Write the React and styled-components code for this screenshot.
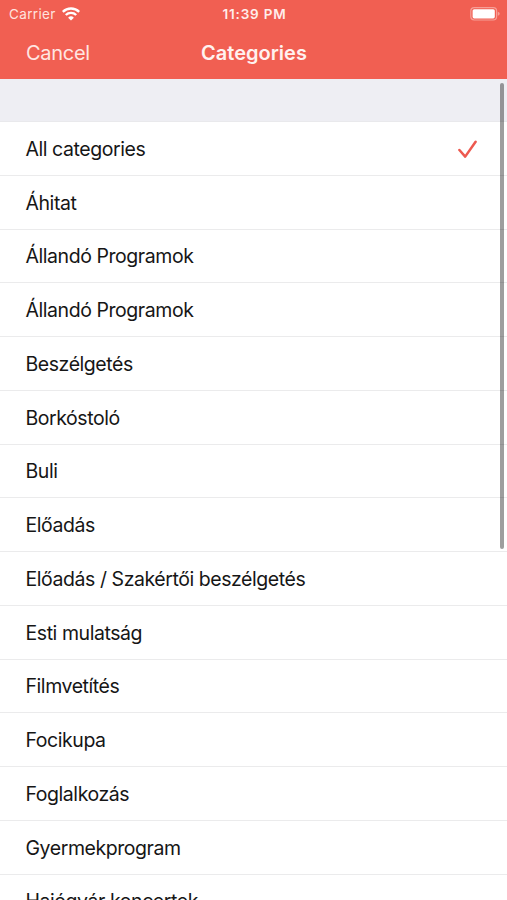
import React from 'react';
import styled, { createGlobalStyle } from 'styled-components';

const categories = [
  'All categories',
  'Áhitat',
  'Állandó Programok',
  'Állandó Programok',
  'Beszélgetés',
  'Borkóstoló',
  'Buli',
  'Előadás',
  'Előadás / Szakértői beszélgetés',
  'Esti mulatság',
  'Filmvetítés',
  'Focikupa',
  'Foglalkozás',
  'Gyermekprogram',
  'Hajógyár koncertek',
];

const App = () => {
  const [selected, setSelected] = React.useState(0);

  return (
    <React.Fragment>
      <GlobalStyle />
      <Screen>
        <Header>
          <StatusBar>
            <Carrier>
              <span>Carrier</span>
              <WifiIcon />
            </Carrier>
            <Time>11:39 PM</Time>
            <BatteryIcon />
          </StatusBar>
          <NavBar>
            <CancelButton type="button">Cancel</CancelButton>
            <Title>Categories</Title>
          </NavBar>
        </Header>
        <SectionGap />
        <List>
          {categories.map((name, idx) => (
            <Row key={idx} onClick={() => setSelected(idx)}>
              <span>{name}</span>
              {selected === idx && <CheckIcon />}
            </Row>
          ))}
        </List>
        <ScrollThumb />
      </Screen>
    </React.Fragment>
  );
};

export default App;

const WifiIcon = () => (
  <svg width="18" height="14" viewBox="0 0 18 14" fill="none" stroke="#fff" strokeWidth="2.4">
    <path d="M0.8 4.9 A11.6 11.6 0 0 1 17.2 4.9" />
    <path d="M3.8 8 A7.4 7.4 0 0 1 14.2 8" />
    <path d="M9 13.6 L6.1 10.7 A4.1 4.1 0 0 1 11.9 10.7 Z" fill="#fff" stroke="none" />
  </svg>
);

const BatteryIcon = () => (
  <svg width="30" height="14" viewBox="0 0 30 14">
    <rect x="0.8" y="0.6" width="25.8" height="12.4" rx="3.4" fill="none" stroke="#fff" strokeOpacity="0.4" strokeWidth="1.2" />
    <rect x="2.6" y="2.2" width="22.2" height="9.2" rx="1.6" fill="#fff" />
    <path d="M27.8 4.8 Q29.7 5.4 29.7 6.8 Q29.7 8.2 27.8 8.8 Z" fill="#fff" fillOpacity="0.4" />
  </svg>
);

const CheckIcon = () => (
  <svg width="20" height="20" viewBox="0 0 20 20" fill="none" stroke="#ed594f" strokeWidth="2.5" strokeLinecap="round" strokeLinejoin="round">
    <path d="M1.4 11 L7.2 17.6 L17.6 2.7" />
  </svg>
);

const GlobalStyle = createGlobalStyle`
  body {
    margin: 0;
    background: #ffffff;
  }
  * {
    box-sizing: border-box;
  }
`;

const Screen = styled.div`
  position: relative;
  width: 507px;
  height: 900px;
  overflow: hidden;
  background: #ffffff;
  color: #161616;
  font-family: Inter, "Liberation Sans", sans-serif;
`;

const Header = styled.header`
  height: 79px;
  background: #f15f52;
  color: #ffffff;
`;

const StatusBar = styled.div`
  display: grid;
  grid-template-columns: 1fr auto 1fr;
  align-items: center;
  height: 27px;
  padding: 0 7px 0 9px;

  & > svg {
    justify-self: end;
  }
`;

const Carrier = styled.div`
  display: flex;
  align-items: center;
  gap: 6px;
  font-size: 13.5px;
  letter-spacing: 0.35px;
  color: #ffe3df;
`;

const Time = styled.span`
  font-size: 13.5px;
  font-weight: 600;
  letter-spacing: 0.8px;
  color: #ffeeeb;
`;

const NavBar = styled.div`
  display: grid;
  grid-template-columns: 1fr auto 1fr;
  align-items: center;
  height: 52px;
  padding: 0 25px 1px 26px;
`;

const CancelButton = styled.button`
  justify-self: start;
  padding: 0;
  border: 0;
  background: none;
  font-family: inherit;
  font-size: 20px;
  letter-spacing: -0.3px;
  color: #ffe6e2;
  cursor: pointer;
`;

const Title = styled.h1`
  margin: 0;
  font-size: 20px;
  font-weight: 600;
  letter-spacing: 0;
  color: #fff2f0;
`;

const SectionGap = styled.div`
  height: 43px;
  background: #eeeef3;
  border-bottom: 1px solid #e9e9ec;
`;

const List = styled.ul`
  margin: 0;
  padding: 0;
  list-style: none;
`;

const Row = styled.li`
  display: flex;
  align-items: center;
  justify-content: space-between;
  height: 53.76px;
  padding: 1.2px 29px 0 25.5px;
  border-bottom: 1px solid #ebebec;
  font-size: 19.5px;
  letter-spacing: -0.44px;
  cursor: pointer;
`;

const ScrollThumb = styled.div`
  position: absolute;
  top: 83px;
  right: 3px;
  width: 4px;
  height: 466px;
  border-radius: 2px;
  background: rgba(0, 0, 0, 0.38);
`;
